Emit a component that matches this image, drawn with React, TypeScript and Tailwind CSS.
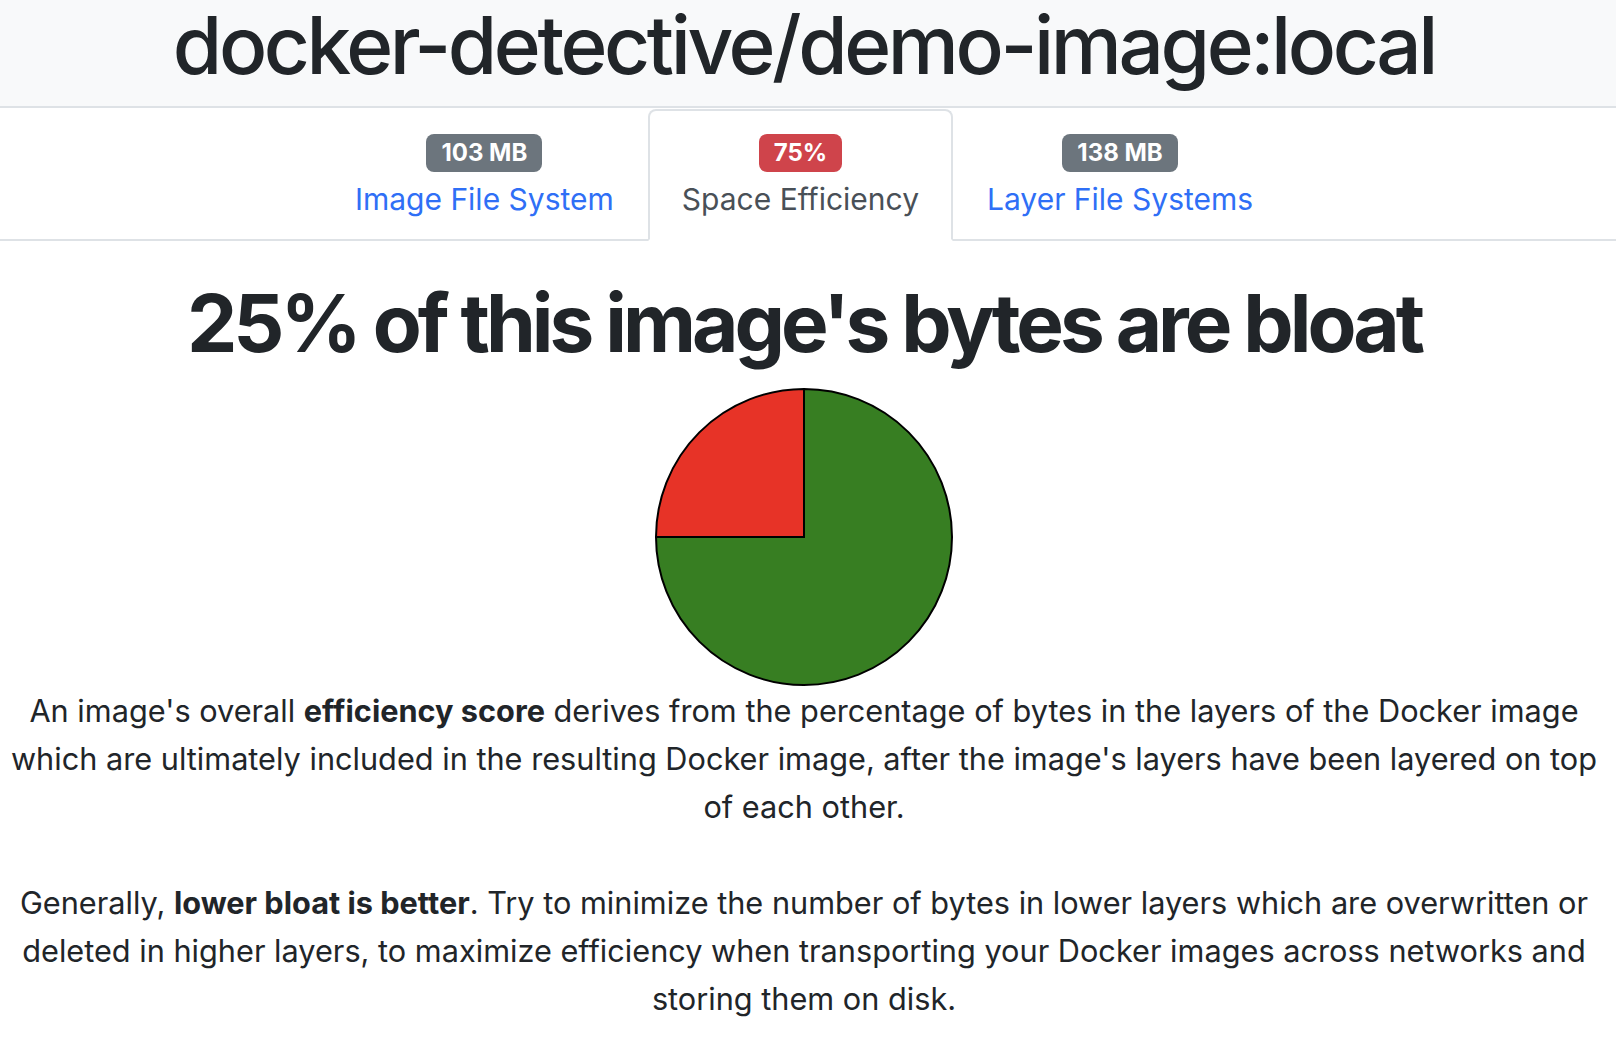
const tabs = [
  { badge: "103 MB", label: "Image File System", tone: "bg-[#6c757d]", active: false },
  { badge: "75%", label: "Space Efficiency", tone: "bg-[#cf444b]", active: true },
  { badge: "138 MB", label: "Layer File Systems", tone: "bg-[#6c757d]", active: false },
];

const PieChart = () => (
  <svg width="300" height="300" viewBox="0 0 300 300" className="block mx-auto">
    {/* bloat slice */}
    <path d="M150,150 L150,2 A148,148 0 0,0 2,150 Z" fill="#e73327" stroke="#000" strokeWidth="2" />
    {/* efficient part */}
    <path d="M150,150 L2,150 A148,148 0 1,0 150,2 Z" fill="#377e22" stroke="#000" strokeWidth="2" />
  </svg>
);

export default function App() {
  return (
    <div className="min-h-screen bg-white text-[#212529] font-['Inter',sans-serif]">
      <header className="h-[108px] bg-[#f8f9fa] border-b-2 border-[#dee2e6] pr-2 flex justify-center">
        <h1 className="text-[80px] leading-[96px] -mt-[3px] font-medium tracking-[-3.4px] whitespace-nowrap">
          docker-detective/demo-image:local
        </h1>
      </header>

      <nav className="flex justify-center border-b-2 border-[#dee2e6] pr-2 pt-px">
        {tabs.map((tab) => (
          <a
            key={tab.label}
            href="#"
            className={`-mb-[2px] px-8 py-4 border-2 rounded-t-lg flex flex-col items-center ${
              tab.active
                ? "border-[#dee2e6] border-b-white bg-white text-[#495057]"
                : "border-transparent text-[#2f6ff6]"
            }`}
          >
            <div className="h-[48px] flex items-center pt-[4px]">
              <span
                className={`${tab.tone} text-white font-bold text-[24px] leading-none px-[15px] py-[7px] rounded-[8px]`}
              >
                {tab.badge}
              </span>
            </div>
            <div className="h-[48px] flex items-center text-[30px] leading-[48px]">{tab.label}</div>
          </a>
        ))}
      </nav>

      <main className="pr-2 text-center">
        <h2 className="mt-[34px] mb-[16px] text-[80px] leading-[96px] font-bold tracking-[-4px] whitespace-nowrap">
          25% of this image's bytes are bloat
        </h2>
        <PieChart />
        <p className="text-[30.7px] leading-[48px]">
          An image's overall <b>efficiency score</b> derives from the percentage of bytes in the layers of the
          Docker image which are ultimately included in the resulting Docker image, after the image's layers have
          been layered on top of each other.
        </p>
        <p className="mt-[48px] text-[30.7px] leading-[48px]">
          Generally, <b>lower bloat is better</b>. Try to minimize the number of bytes in lower layers which are
          overwritten or deleted in higher layers, to maximize efficiency when transporting your Docker images
          across networks and storing them on disk.
        </p>
      </main>
    </div>
  );
}
